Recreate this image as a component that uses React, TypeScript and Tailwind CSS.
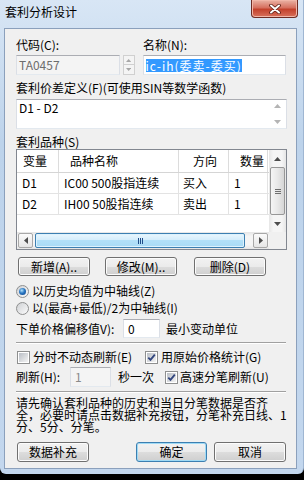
import React from "react";

type Dir = "up" | "down" | "left" | "right";

const Tri = ({ dir, color = "#4d4d4d", s = 1 }: { dir: Dir; color?: string; s?: number }) => {
  const pts = {
    up: "0,4 3.5,0 7,4",
    down: "0,0 7,0 3.5,4",
    left: "4,0 4,7 0,3.5",
    right: "0,0 0,7 4,3.5",
  }[dir];
  const horiz = dir === "up" || dir === "down";
  return (
    <svg width={(horiz ? 7 : 4) * s} height={(horiz ? 4 : 7) * s} viewBox={horiz ? "0 0 7 4" : "0 0 4 7"}>
      <polygon points={pts} fill={color} />
    </svg>
  );
};

const Btn = ({ className = "", primary = false, children }: { className?: string; primary?: boolean; children: React.ReactNode }) => (
  <div
    className={
      "flex items-center justify-center rounded-[3px] border text-[12px] leading-[14px] bg-[linear-gradient(to_bottom,#f2f2f2_0%,#ebebeb_50%,#dddddd_50%,#cfcfcf_100%)] " +
      (primary
        ? "border-[#3c7fb1] shadow-[inset_0_0_0_1px_#9fdaf5] "
        : "border-[#707070] shadow-[inset_0_0_0_1px_#fcfcfc] ") +
      className
    }
  >
    {children}
  </div>
);

const Radio = ({ on = false }: { on?: boolean }) => (
  <div className="flex h-[13px] w-[13px] items-center justify-center rounded-full border border-[#8e8f8f] bg-[linear-gradient(135deg,#cfd1d4,#fbfbfb)]">
    {on && (
      <div className="h-[7px] w-[7px] rounded-full bg-[radial-gradient(circle_at_40%_35%,#b5e3fb_0%,#2a77c2_45%,#0d3f86_100%)]" />
    )}
  </div>
);

const Check = ({ on = false }: { on?: boolean }) => (
  <div className="h-[13px] w-[13px] border border-[#8e8f8f] bg-white p-[1px]">
    <div className="flex h-full w-full items-center justify-center bg-[linear-gradient(135deg,#b9bec5,#f4f4f4)]">
      {on && (
        <svg width="9" height="9" viewBox="0 0 9 9">
          <path d="M1.3 4.6 L3.5 6.9 L7.8 1.6" fill="none" stroke="#31457e" strokeWidth="1.8" />
        </svg>
      )}
    </div>
  </div>
);

const field = "border border-[#abadb3] border-l-[#dbdfe6] border-r-[#dbdfe6] border-b-[#e3e9ef]";

const cols = ["w-[41px]", "w-[120px]", "w-[50px]", "w-[40px]"];

const rows = [
  ["D1", "IC00 500股指连续", "买入", "1"],
  ["D2", "IH00 50股指连续", "卖出", "1"],
];

export default function App() {
  return (
    <div className="h-[480px] w-[304px] bg-black text-[12px] text-black font-['Noto_Sans_CJK_SC',sans-serif]">
      <div className="flex h-[474px] flex-col rounded-b-[6px] border-r border-[#9fb6d2] bg-[linear-gradient(to_bottom,#d8e6f5,#bdd3eb_30%,#c3d7ee)]">
        {/* title bar */}
        <div className="flex h-[28px] items-start justify-between pl-[5px] pr-[5px]">
          <div className="mt-[5px] leading-[14px]">套利分析设计</div>
          <div className="flex h-[18px] w-[47px] items-center justify-center rounded-b-[4px] border border-t-0 border-[#6e2c24] bg-[linear-gradient(to_bottom,#eab3a5,#d6705f_45%,#c3412c_55%,#d8715c)] shadow-[inset_0_0_0_1px_#f1b6a8]">
            <svg width="12" height="10" viewBox="0 0 12 10">
              <path d="M2 1.5 L10 8.5 M10 1.5 L2 8.5" stroke="#5a1d14" strokeWidth="3.6" strokeLinecap="round" />
              <path d="M2 1.5 L10 8.5 M10 1.5 L2 8.5" stroke="#ffffff" strokeWidth="2" strokeLinecap="round" />
            </svg>
          </div>
        </div>

        {/* client area */}
        <div className="ml-[4px] mr-[6px] flex h-[441px] flex-col border border-[#8ba0bc] bg-[#f0f0f0] pl-[11px] pr-[10px]">
          <div className="mt-[9px] flex h-[14px] leading-[14px]">
            <div className="w-[127px]">代码(C):</div>
            <div>名称(N):</div>
          </div>

          <div className="mt-[3px] flex h-[20px]">
            <div className={`${field} flex w-[104px] items-center bg-[#f4f4f4] pl-[2px] text-[#6d6d6d]`}>TA0457</div>
            <div className="ml-[3px] flex w-[12px] flex-col">
              <div className="flex h-[10px] items-center justify-center border border-[#d0d0d0] bg-[#f4f4f4]">
                <Tri dir="up" color="#a6a6a6" s={0.75} />
              </div>
              <div className="flex h-[10px] items-center justify-center border border-t-0 border-[#d0d0d0] bg-[#f4f4f4]">
                <Tri dir="down" color="#a6a6a6" s={0.75} />
              </div>
            </div>
            <div className={`${field} ml-[8px] flex w-[144px] items-center bg-white pl-[2px]`}>
              <span className="bg-[#3399ff] leading-[13px] tracking-[1px] text-white">ic-ih(委卖-委买)</span>
            </div>
          </div>

          <div className="mt-[6px] h-[14px] leading-[14px]">套利价差定义(F)(可使用SIN等数学函数)</div>

          <div className={`${field} mt-[4px] flex h-[30px] w-[271px] bg-white`}>
            <div className="flex-1 pl-[2px] pt-[1px] leading-[14px]">D1 - D2</div>
            <div className="flex w-[17px] flex-col items-center justify-between py-[4px]">
              <Tri dir="up" color="#b4b4b4" />
              <Tri dir="down" color="#b4b4b4" />
            </div>
          </div>

          <div className="mt-[6px] h-[14px] leading-[14px]">套利品种(S)</div>

          {/* list view */}
          <div className="flex h-[101px] w-[271px] flex-col border border-[#828790] bg-white">
            <div className="flex h-[82px]">
              <div className="flex w-[252px] flex-col">
                <div className="flex h-[23px] border-b border-[#d5d5d5]">
                  <div className={`${cols[0]} flex items-center pl-[6px]`}>变量</div>
                  <div className={`${cols[1]} flex items-center border-l border-[#dcdcdc] pl-[11px]`}>品种名称</div>
                  <div className={`${cols[2]} flex items-center border-l border-[#dcdcdc] pl-[14px]`}>方向</div>
                  <div className={`${cols[3]} flex items-center border-x border-[#dcdcdc] pl-[11px]`}>数量</div>
                </div>
                {rows.map((r) => (
                  <div key={r[0]} className="flex h-[21px] border-b border-[#e3e3e3]">
                    {r.map((c, i) => (
                      <div
                        key={i}
                        className={`${cols[i]} flex items-center ${i > 0 ? "border-l border-[#e3e3e3]" : ""} ${i === 3 ? "border-r" : ""} ${i === 2 ? "pl-[4px]" : "pl-[5px]"}`}
                      >
                        {c}
                      </div>
                    ))}
                  </div>
                ))}
              </div>
              {/* vertical scrollbar */}
              <div className="flex w-[17px] flex-col bg-[linear-gradient(to_right,#e6e6e6,#f5f5f5_25%,#f5f5f5_75%,#e6e6e6)]">
                <div className="flex h-[17px] items-center justify-center">
                  <Tri dir="up" />
                </div>
                <div className="mx-[1px] flex h-[48px] items-center justify-center rounded-[2px] border border-[#979797] bg-[linear-gradient(to_right,#f5f5f5,#e8e8e8_50%,#d6d6d6)]">
                  <div className="flex flex-col gap-[1px]">
                    <div className="h-[1px] w-[6px] bg-[#6e6e6e]" />
                    <div className="h-[1px] w-[6px] bg-[#6e6e6e]" />
                    <div className="h-[1px] w-[6px] bg-[#6e6e6e]" />
                  </div>
                </div>
                <div className="flex h-[17px] items-center justify-center">
                  <Tri dir="down" />
                </div>
              </div>
            </div>
            {/* horizontal scrollbar */}
            <div className="flex h-[17px]">
              <div className="flex w-[252px] items-center bg-[linear-gradient(to_bottom,#e6e6e6,#f5f5f5_25%,#f5f5f5_75%,#e6e6e6)]">
                <div className="ml-[1px] flex h-[15px] w-[15px] items-center justify-center rounded-[2px] border border-[#a8a8a8] bg-[linear-gradient(to_bottom,#fbfbfb,#e6e6e6)]">
                  <Tri dir="left" />
                </div>
                <div className="ml-[2px] flex h-[15px] w-[210px] items-center justify-center rounded-[2px] border border-[#3c7fb1] bg-[linear-gradient(to_bottom,#e9f6fd,#d2ecfb_50%,#b2e0f8_50%,#a9dbf6)] shadow-[inset_0_0_0_1px_#ddf2fd]">
                  <div className="flex gap-[1px]">
                    <div className="h-[6px] w-[1px] bg-[#204d89]" />
                    <div className="h-[6px] w-[1px] bg-[#204d89]" />
                    <div className="h-[6px] w-[1px] bg-[#204d89]" />
                  </div>
                </div>
                <div className="flex-1" />
                <div className="mr-[1px] flex h-[15px] w-[15px] items-center justify-center rounded-[2px] border border-[#a8a8a8] bg-[linear-gradient(to_bottom,#fbfbfb,#e6e6e6)]">
                  <Tri dir="right" />
                </div>
              </div>
              <div className="w-[17px] bg-[#f0f0f0]" />
            </div>
          </div>

          <div className="mt-[7px] flex h-[19px]">
            <Btn className="ml-[2px] w-[72px]">新增(A)..</Btn>
            <Btn className="ml-[15px] w-[72px]">修改(M)..</Btn>
            <Btn className="ml-[17px] w-[72px]">删除(D)</Btn>
          </div>

          <div className="mt-[8px] flex h-[14px] items-center">
            <Radio on />
            <span className="ml-[3px] leading-[14px]">以历史均值为中轴线(Z)</span>
          </div>
          <div className="mt-[3px] flex h-[14px] items-center">
            <Radio />
            <span className="ml-[3px] leading-[14px]">以(最高+最低)/2为中轴线(I)</span>
          </div>

          <div className="mt-[4px] flex h-[19px] items-center">
            <div className="w-[107px] whitespace-nowrap leading-[14px]">下单价格偏移值V):</div>
            <div className={`${field} flex h-[19px] w-[37px] items-center bg-white pl-[4px]`}>0</div>
            <div className="ml-[6px] leading-[14px]">最小变动单位</div>
          </div>

          <div className="mt-[4px] h-[2px] border-t border-b border-t-[#a0a0a0] border-b-white" />

          <div className="mt-[6px] flex h-[14px] items-center">
            <div className="ml-[1px] flex w-[128px] items-center">
              <Check />
              <span className="ml-[3px] leading-[14px]">分时不动态刷新(E)</span>
            </div>
            <Check on />
            <span className="ml-[3px] leading-[14px]">用原始价格统计(G)</span>
          </div>

          <div className="mt-[3px] flex h-[20px] items-center">
            <div className="w-[54px] leading-[14px]">刷新(H):</div>
            <div className={`${field} flex h-[20px] w-[41px] items-center bg-[#f4f4f4] pl-[4px] text-[#8a8a8a]`}>1</div>
            <div className="ml-[7px] w-[47px] leading-[14px]">秒一次</div>
            <Check on />
            <span className="ml-[2px] leading-[14px]">高速分笔刷新(U)</span>
          </div>

          <div className="mt-[4px] h-[2px] border-t border-b border-t-[#a0a0a0] border-b-white" />

          <div className="mt-[4px] h-[36px] whitespace-nowrap leading-[12px]">
            请先确认套利品种的历史和当日分笔数据是否齐
            <br />
            全，必要时请点击数据补充按钮，分笔补充日线、1
            <br />
            分、5分、分笔。
          </div>

          <div className="mt-[9px] flex h-[20px]">
            <Btn className="ml-[1px] w-[72px]">数据补充</Btn>
            <Btn primary className="ml-[47px] w-[71px]">确定</Btn>
            <Btn className="ml-[7px] w-[72px]">取消</Btn>
          </div>
        </div>
      </div>
    </div>
  );
}
